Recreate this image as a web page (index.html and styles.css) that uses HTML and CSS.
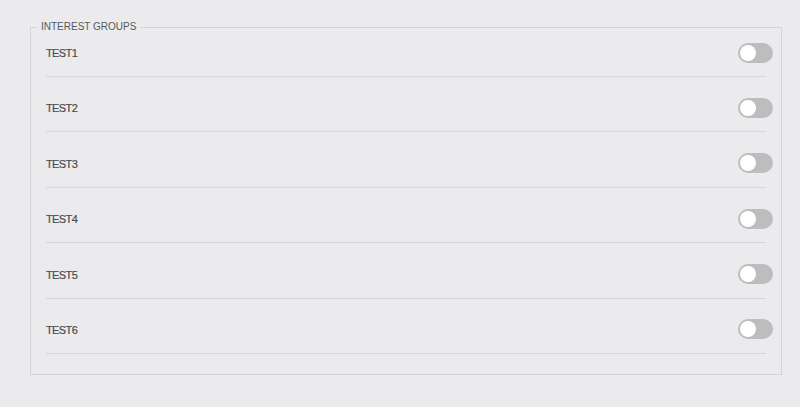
FILE: index.html
```html
<!DOCTYPE html>
<html>
<head>
<meta charset="utf-8">
<link rel="stylesheet" href="styles.css">
</head>
<body>
<div class="page">
  <fieldset class="groups">
    <legend class="groups-title">INTEREST GROUPS</legend>
    <div class="row"><span class="label">TEST1</span><span class="toggle"><span class="knob"></span></span></div>
    <div class="row"><span class="label">TEST2</span><span class="toggle"><span class="knob"></span></span></div>
    <div class="row"><span class="label">TEST3</span><span class="toggle"><span class="knob"></span></span></div>
    <div class="row"><span class="label">TEST4</span><span class="toggle"><span class="knob"></span></span></div>
    <div class="row"><span class="label">TEST5</span><span class="toggle"><span class="knob"></span></span></div>
    <div class="row"><span class="label">TEST6</span><span class="toggle"><span class="knob"></span></span></div>
  </fieldset>
</div>
</body>
</html>
```

FILE: styles.css
```css
html, body {
  margin: 0;
  padding: 0;
  background: #ebebed;
  font-family: "Liberation Sans", Arial, sans-serif;
}
.page {
  padding: 21px 18px 32px 30px;
}
.groups {
  margin: 0;
  border: 1px solid #d4d4d6;
  padding: 0 15px 20px 15px;
  min-width: 0;
}
.groups-title {
  margin-left: -9px;
  padding: 0 4px;
  font-size: 10px;
  line-height: 12px;
  color: #58585a;
}
.row {
  display: flex;
  align-items: center;
  justify-content: space-between;
  height: 55.4px;
  box-sizing: border-box;
  padding: 20.9px 0 13.5px;
  border-bottom: 1px solid #d6d6d8;
}
.row:first-of-type {
  height: 44px;
  padding-top: 9.5px;
}
.label {
  font-size: 11px;
  letter-spacing: -0.6px;
  line-height: 20px;
  padding-top: 1px;
  color: #4c4c4e;
  -webkit-text-stroke: 0.2px #4c4c4e;
}
.toggle {
  display: flex;
  align-items: center;
  width: 35px;
  height: 20px;
  box-sizing: border-box;
  padding: 2px;
  border-radius: 10px;
  background: #bdbdbf;
  margin-right: -7px;
}
.knob {
  width: 16px;
  height: 16px;
  border-radius: 50%;
  background: #ffffff;
}
```
